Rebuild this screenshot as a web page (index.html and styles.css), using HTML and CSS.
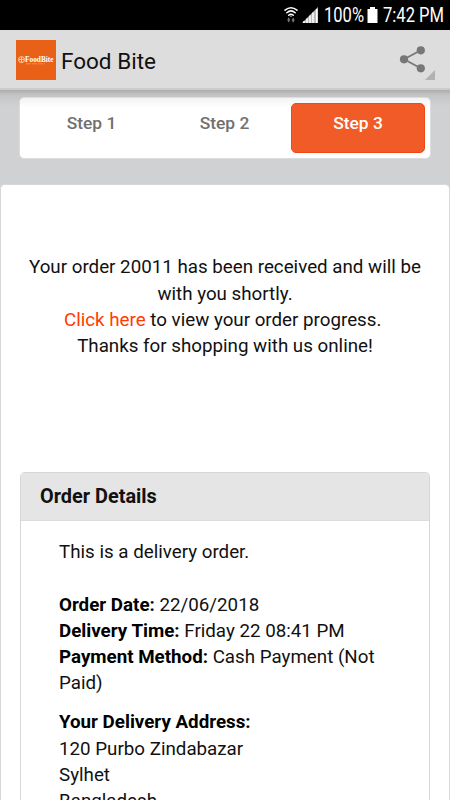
FILE: index.html
```html
<!DOCTYPE html>
<html lang="en">
<head>
    <meta charset="UTF-8">
    <title>Food Bite</title>
    <link rel="stylesheet" href="styles.css">
</head>
<body>

<div class="status-bar">
    <svg width="180" height="30" viewBox="0 0 180 30">
        <!-- wifi -->
        <g fill="none" stroke="#fff" stroke-width="1.5" stroke-linecap="round">
            <path d="M15 10.2Q21 5.2 27 10.2"/>
            <path d="M16.8 12.8Q21 9 25.2 12.8"/>
            <path d="M18.7 15.2Q21 13.2 23.3 15.2"/>
        </g>
        <path d="M19.8 15.7h2.4L21 17z" fill="#fff"/>
        <path d="M17 19.5h1v-1.8h1.5v1.8h1L18.7 22.5zM21.5 20.5l1.7-3 1.7 3h-1v1.8h-1.5v-1.8z" fill="#777"/>
        <!-- signal -->
        <path d="M32 23L48 7v16z" fill="#bbb"/>
        <path d="M34 21v2M37 18.5V23M40 15.5V23M43 12.5V23M46.7 9V23" stroke="#fff" stroke-width="1.5"/>
        <!-- battery -->
        <path d="M97.5 9H100V7h5v2h2.5v14h-10z" fill="#fff"/>
        <text x="54" y="22.3" textLength="40" lengthAdjust="spacingAndGlyphs">100%</text>
        <text x="113" y="22.3" textLength="61" lengthAdjust="spacingAndGlyphs">7:42 PM</text>
    </svg>
</div>

<div class="header">
    <svg class="logo" width="40" height="40" viewBox="0 0 40 40">
        <rect width="40" height="40" fill="#e96117"/>
        <circle cx="5.5" cy="19.6" r="3" fill="none" stroke="#fbd9c5" stroke-width=".9"/>
        <path d="M3 19.5h5M5.5 17v5" stroke="#fbd9c5" stroke-width=".9"/>
        <text class="logo-name" x="9" y="22" textLength="28.5" lengthAdjust="spacingAndGlyphs">FoodBite</text>
        <path d="M10 23.8h19" stroke="#f3a47c" stroke-width=".7" stroke-dasharray="5 1"/>
    </svg>
    <h1>Food Bite</h1>
    <svg class="share" width="38" height="38" viewBox="0 0 38 38">
        <path d="M23.8 8.3L7 17.3l16.8 9" fill="none" stroke="#777" stroke-width="1.8"/>
        <g fill="#777">
            <circle cx="23.8" cy="8.3" r="4.1"/>
            <circle cx="7" cy="17.3" r="4.1"/>
            <circle cx="23.8" cy="26.3" r="4.1"/>
        </g>
        <path d="M38 28v10H28z" fill="#b1b1b1"/>
    </svg>
</div>

<div class="steps-area">
    <div class="steps">
        <div class="step">Step 1</div>
        <div class="step">Step 2</div>
        <div class="step active">Step 3</div>
    </div>
</div>

<div class="card">
    <p class="message">
        Your order 20011 has been received and will be with you shortly.<br>
        <a class="link">Click here</a> to view your order progress.&nbsp;<br>
        Thanks for shopping with us online!
    </p>

    <div class="details">
        <h2>Order Details</h2>
        <div class="details-body">
            <p class="type">This is a delivery order.</p>
            <p class="info">
                <b>Order Date:</b> 22/06/2018<br>
                <b>Delivery Time:</b> Friday 22 08:41 PM<br>
                <b>Payment Method:</b> Cash Payment (Not Paid)
            </p>
            <p>
                <b>Your Delivery Address:</b><br>
                120 Purbo Zindabazar<br>
                Sylhet<br>
                Bangladesh
            </p>
        </div>
    </div>
</div>

</body>
</html>
```
FILE: styles.css
```css
* {
    box-sizing: border-box;
}
body {
    margin: 0;
    height: 800px;
    overflow: hidden;
    display: flex;
    flex-direction: column;
    background-color: #d0d1d3;
    font-family: Roboto, sans-serif;
    font-size: 18.75px;
    line-height: 26.2px;
    color: #111;
}
h1, h2, p {
    margin: 0;
}
.status-bar {
    flex: none;
    display: flex;
    justify-content: flex-end;
    height: 30px;
    background-color: #000;
}
.status-bar text {
    fill: #fff;
    font-size: 20px;
}
.header {
    flex: none;
    display: flex;
    align-items: center;
    height: 60px;
    padding: 0 15px 0 16px;
    background-color: #ddd;
    border-bottom: 2px solid #cbcbcb;
}
.logo {
    margin-top: 2px;
}
.logo-name {
    fill: #fff;
    font-family: "Liberation Serif", serif;
    font-size: 8.5px;
    font-weight: bold;
}
.header h1 {
    margin: 4px 0 0 5px;
    font-size: 22.5px;
    font-weight: normal;
}
.share {
    margin: 4px 0 0 auto;
}
.steps-area {
    flex: none;
    height: 94px;
    padding: 7px 19px 0;
    background: linear-gradient(#acadaf, #c3c4c6 5px, #d0d1d3 16px);
}
.steps {
    display: flex;
    height: 62px;
    padding: 5px;
    background: linear-gradient(#f3f3f3, #fff 9px);
    border: 1px solid #dcddde;
    border-radius: 5px;
}
.step {
    flex: 1 1 0;
    min-width: 0;
    padding-top: 7px;
    font-size: 17.4px;
    font-weight: 500;
    text-align: center;
    color: #707070;
}
.active {
    flex: none;
    width: 134px;
    padding-top: 6px;
    color: #fff;
    background-color: #f15b27;
    border: 1px solid #ef4a14;
    border-radius: 5px;
}
.card {
    flex: 1;
    min-height: 0;
    padding: 69.4px 19px 0;
    background-color: #fff;
    border: 1px solid #d8d8d8;
    border-bottom: 0;
    border-radius: 5px 5px 0 0;
}
.message {
    height: 217.6px;
    text-align: center;
}
.link {
    color: #ff3c00;
}
.details {
    height: 328px;
    border: 1px solid #d6d6d6;
    border-bottom: 0;
    border-radius: 5px 5px 0 0;
    overflow: hidden;
}
.details h2 {
    height: 48px;
    padding: 11px 19px 0;
    font-size: 19.9px;
    font-weight: bold;
    background-color: #e5e5e5;
    border-bottom: 1px solid #dcdcdc;
}
.details-body {
    padding: 18.3px 38px 0;
}
.details b {
    color: #000;
}
.type {
    margin-bottom: 26.2px;
}
.info {
    margin-bottom: 13px;
}
```
